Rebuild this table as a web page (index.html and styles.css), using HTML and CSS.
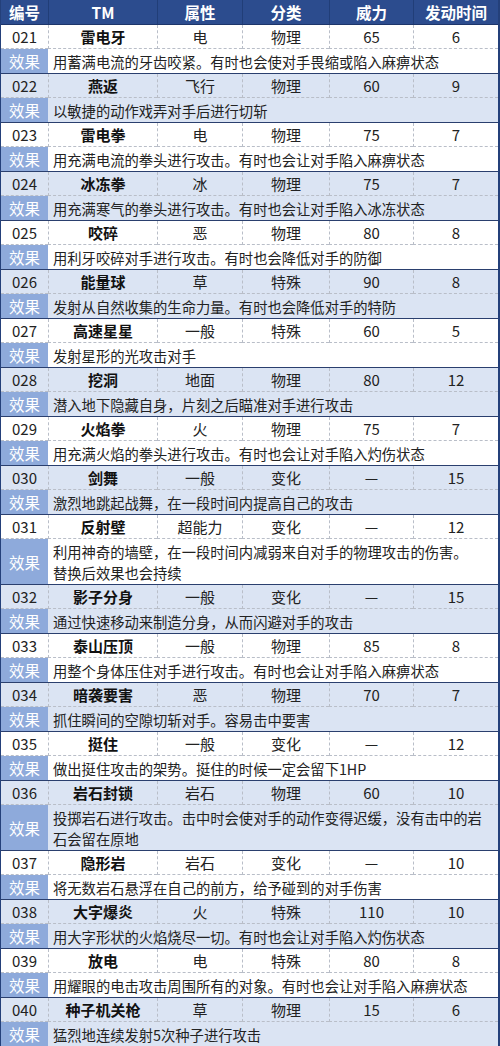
FILE: index.html
```html
<!DOCTYPE html>
<html lang="zh">
<head>
<meta charset="utf-8">
<link rel="stylesheet" href="styles.css">
</head>
<body>
<div class="table">
  <div class="head">
    <div>编号</div><div>TM</div><div>属性</div><div>分类</div><div>威力</div><div>发动时间</div>
  </div>

  <div class="group">
    <div class="c">021</div><div class="c name">雷电牙</div><div class="c">电</div><div class="c">物理</div><div class="c">65</div><div class="c">6</div>
    <div class="lab">效果</div><div class="eff">用蓄满电流的牙齿咬紧。有时也会使对手畏缩或陷入麻痹状态</div>
  </div>
  <div class="group alt">
    <div class="c">022</div><div class="c name">燕返</div><div class="c">飞行</div><div class="c">物理</div><div class="c">60</div><div class="c">9</div>
    <div class="lab">效果</div><div class="eff">以敏捷的动作戏弄对手后进行切斩</div>
  </div>
  <div class="group">
    <div class="c">023</div><div class="c name">雷电拳</div><div class="c">电</div><div class="c">物理</div><div class="c">75</div><div class="c">7</div>
    <div class="lab">效果</div><div class="eff">用充满电流的拳头进行攻击。有时也会让对手陷入麻痹状态</div>
  </div>
  <div class="group alt">
    <div class="c">024</div><div class="c name">冰冻拳</div><div class="c">冰</div><div class="c">物理</div><div class="c">75</div><div class="c">7</div>
    <div class="lab">效果</div><div class="eff">用充满寒气的拳头进行攻击。有时也会让对手陷入冰冻状态</div>
  </div>
  <div class="group">
    <div class="c">025</div><div class="c name">咬碎</div><div class="c">恶</div><div class="c">物理</div><div class="c">80</div><div class="c">8</div>
    <div class="lab">效果</div><div class="eff">用利牙咬碎对手进行攻击。有时也会降低对手的防御</div>
  </div>
  <div class="group alt">
    <div class="c">026</div><div class="c name">能量球</div><div class="c">草</div><div class="c">特殊</div><div class="c">90</div><div class="c">8</div>
    <div class="lab">效果</div><div class="eff">发射从自然收集的生命力量。有时也会降低对手的特防</div>
  </div>
  <div class="group">
    <div class="c">027</div><div class="c name">高速星星</div><div class="c">一般</div><div class="c">特殊</div><div class="c">60</div><div class="c">5</div>
    <div class="lab">效果</div><div class="eff">发射星形的光攻击对手</div>
  </div>
  <div class="group alt">
    <div class="c">028</div><div class="c name">挖洞</div><div class="c">地面</div><div class="c">物理</div><div class="c">80</div><div class="c">12</div>
    <div class="lab">效果</div><div class="eff">潜入地下隐藏自身，片刻之后瞄准对手进行攻击</div>
  </div>
  <div class="group">
    <div class="c">029</div><div class="c name">火焰拳</div><div class="c">火</div><div class="c">物理</div><div class="c">75</div><div class="c">7</div>
    <div class="lab">效果</div><div class="eff">用充满火焰的拳头进行攻击。有时也会让对手陷入灼伤状态</div>
  </div>
  <div class="group alt">
    <div class="c">030</div><div class="c name">剑舞</div><div class="c">一般</div><div class="c">变化</div><div class="c">—</div><div class="c">15</div>
    <div class="lab">效果</div><div class="eff">激烈地跳起战舞，在一段时间内提高自己的攻击</div>
  </div>
  <div class="group">
    <div class="c">031</div><div class="c name">反射壁</div><div class="c">超能力</div><div class="c">变化</div><div class="c">—</div><div class="c">12</div>
    <div class="lab tall">效果</div><div class="eff tall">利用神奇的墙壁，在一段时间内减弱来自对手的物理攻击的伤害。<br>替换后效果也会持续</div>
  </div>
  <div class="group alt">
    <div class="c">032</div><div class="c name">影子分身</div><div class="c">一般</div><div class="c">变化</div><div class="c">—</div><div class="c">15</div>
    <div class="lab">效果</div><div class="eff">通过快速移动来制造分身，从而闪避对手的攻击</div>
  </div>
  <div class="group">
    <div class="c">033</div><div class="c name">泰山压顶</div><div class="c">一般</div><div class="c">物理</div><div class="c">85</div><div class="c">8</div>
    <div class="lab">效果</div><div class="eff">用整个身体压住对手进行攻击。有时也会让对手陷入麻痹状态</div>
  </div>
  <div class="group alt">
    <div class="c">034</div><div class="c name">暗袭要害</div><div class="c">恶</div><div class="c">物理</div><div class="c">70</div><div class="c">7</div>
    <div class="lab">效果</div><div class="eff">抓住瞬间的空隙切斩对手。容易击中要害</div>
  </div>
  <div class="group">
    <div class="c">035</div><div class="c name">挺住</div><div class="c">一般</div><div class="c">变化</div><div class="c">—</div><div class="c">12</div>
    <div class="lab">效果</div><div class="eff">做出挺住攻击的架势。挺住的时候一定会留下1HP</div>
  </div>
  <div class="group alt">
    <div class="c">036</div><div class="c name">岩石封锁</div><div class="c">岩石</div><div class="c">物理</div><div class="c">60</div><div class="c">10</div>
    <div class="lab tall">效果</div><div class="eff tall">投掷岩石进行攻击。击中时会使对手的动作变得迟缓，没有击中的岩<br>石会留在原地</div>
  </div>
  <div class="group">
    <div class="c">037</div><div class="c name">隐形岩</div><div class="c">岩石</div><div class="c">变化</div><div class="c">—</div><div class="c">10</div>
    <div class="lab">效果</div><div class="eff">将无数岩石悬浮在自己的前方，给予碰到的对手伤害</div>
  </div>
  <div class="group alt">
    <div class="c">038</div><div class="c name">大字爆炎</div><div class="c">火</div><div class="c">特殊</div><div class="c">110</div><div class="c">10</div>
    <div class="lab">效果</div><div class="eff">用大字形状的火焰烧尽一切。有时也会让对手陷入灼伤状态</div>
  </div>
  <div class="group">
    <div class="c">039</div><div class="c name">放电</div><div class="c">电</div><div class="c">特殊</div><div class="c">80</div><div class="c">8</div>
    <div class="lab">效果</div><div class="eff">用耀眼的电击攻击周围所有的对象。有时也会让对手陷入麻痹状态</div>
  </div>
  <div class="group alt last">
    <div class="c">040</div><div class="c name">种子机关枪</div><div class="c">草</div><div class="c">物理</div><div class="c">15</div><div class="c">6</div>
    <div class="lab">效果</div><div class="eff">猛烈地连续发射5次种子进行攻击</div>
  </div>
</div>
</body>
</html>
```
FILE: styles.css
```css
html, body {
  margin: 0;
  padding: 0;
  background: #ffffff;
}
body {
  font-family: "Noto Sans CJK SC", "Noto Sans", sans-serif;
  color: #222222;
  width: 500px;
}
.table {
  width: 500px;
  box-sizing: border-box;
  border-left: 1px solid #24407a;
  border-right: 2px solid #24407a;
}
.head, .group {
  display: grid;
  grid-template-columns: 47px 109px 85px 87px 84px 1fr;
}
.head {
  height: 25px;
  background: #2c4c8e;
  color: #ffffff;
  font-weight: bold;
  font-size: 15.5px;
  border-bottom: 1px solid #1d356a;
  box-sizing: border-box;
}
.head > div {
  display: flex;
  align-items: center;
  justify-content: center;
  border-left: 1px solid #213e78;
}
.head > div:first-child { border-left: none; }
.group {
  background: #ffffff;
  border-bottom: 1px solid #2a3f6e;
}
.group.alt { background: #dbe4f3; }
.group.last { border-bottom: none; }
.c {
  height: 24px;
  display: flex;
  align-items: center;
  justify-content: center;
  font-size: 15px;
  line-height: 1;
  border-left: 1px dashed #b9bec8;
  border-bottom: 1px dashed #b9bec8;
  box-sizing: border-box;
}
.c:first-child { border-left: none; }
.name { font-weight: bold; color: #111111; }
.lab {
  height: 24px;
  background: #8eaadb;
  color: #ffffff;
  font-size: 15.5px;
  display: flex;
  align-items: center;
  justify-content: center;
}
.eff {
  grid-column: 2 / 7;
  height: 24px;
  display: flex;
  align-items: center;
  padding-left: 5px;
  font-size: 14.3px;
  line-height: 21px;
  white-space: nowrap;
}
.lab.tall, .eff.tall { height: 45px; }
.eff.tall { display: block; padding-top: 2px; box-sizing: border-box; }
```
